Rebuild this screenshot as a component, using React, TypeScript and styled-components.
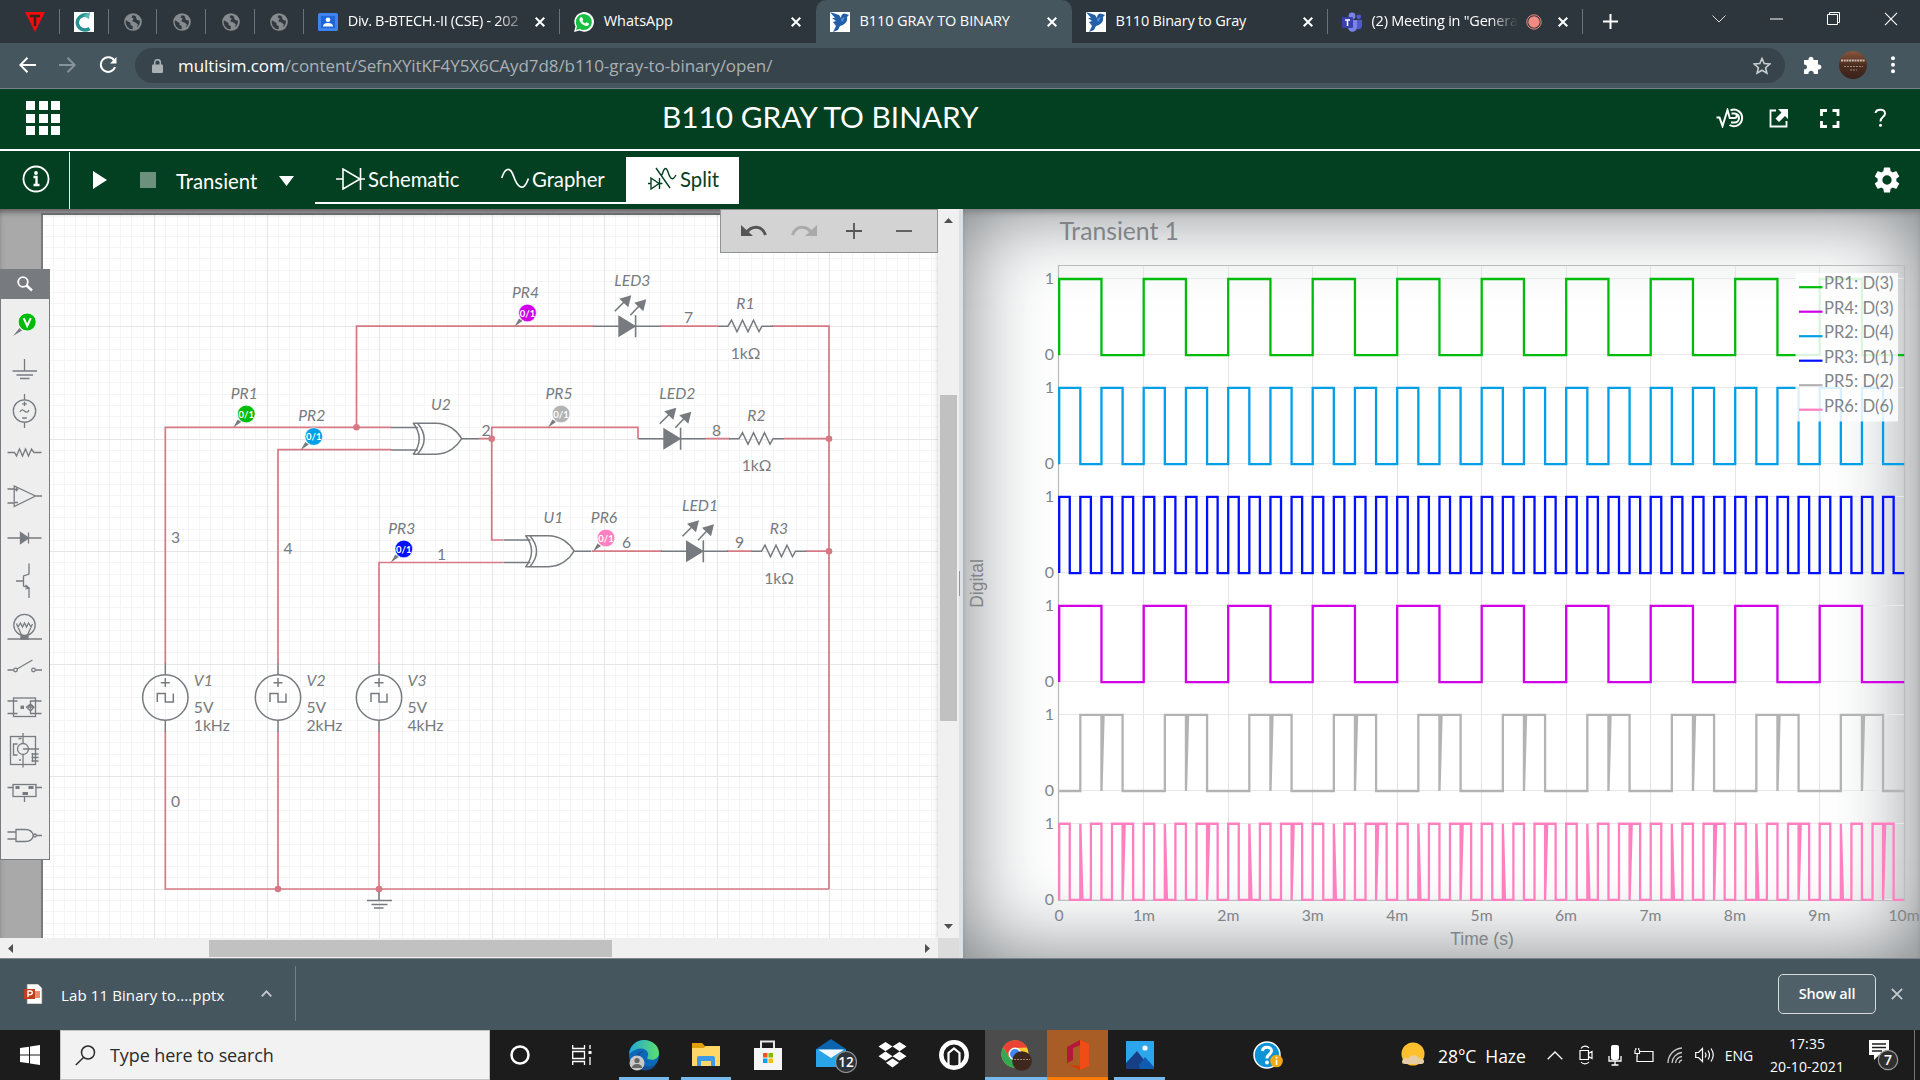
import React from "react";
import styled, { createGlobalStyle, css } from "styled-components";

const UI = `"Open Sans", "Noto Sans", sans-serif`;
const LATO = `Lato, "Open Sans", sans-serif`;

const Global = createGlobalStyle`
  html, body { margin: 0; padding: 0; }
  body { width: 1920px; height: 1080px; overflow: hidden; background: #1c1c1c; }
  * { box-sizing: border-box; }
  svg { display: block; flex: none; }
`;

const Screen = styled.div`
  width: 1920px;
  height: 1080px;
  display: flex;
  flex-direction: column;
  overflow: hidden;
  font-family: ${UI};
`;

/* ---------- browser chrome ---------- */

const TabStrip = styled.div`
  height: 43px;
  flex: none;
  display: flex;
  padding-left: 11px;
  background: #2c363c;
`;

const PinnedTab = styled.div`
  width: 48.8px;
  height: 43px;
  display: flex;
  align-items: center;
  justify-content: center;
  background: linear-gradient(#6b7379, #6b7379) right 9px / 1px 25px no-repeat;
`;

const Tab = styled.div<{ $active?: boolean; $line?: boolean }>`
  width: 256px;
  height: 43px;
  display: flex;
  align-items: center;
  padding: 0 12px 0 14px;
  color: #fff;
  ${(p) => p.$line && css`background: linear-gradient(#6b7379, #6b7379) right 9px / 1px 25px no-repeat;`}
  ${(p) => p.$active && css`background: #45565f; border-radius: 10px 10px 0 0;`}
`;

const TabTitle = styled.span<{ $fade?: boolean; $ls?: number }>`
  flex: 1;
  margin: -2px 0 0 10px;
  font-size: 14.5px;
  line-height: 20px;
  letter-spacing: ${(p) => p.$ls ?? -0.1}px;
  white-space: nowrap;
  ${(p) => p.$fade && css`mask-image: linear-gradient(90deg, #000 80%, transparent 100%);`}
`;

const TabTail = styled.div<{ $w?: number; $split?: boolean }>`
  width: ${(p) => p.$w ?? 38}px;
  display: flex;
  justify-content: ${(p) => (p.$split ? "space-between" : "flex-end")};
  align-items: center;
  padding: 0 3px 0 ${(p) => (p.$split ? 8 : 0)}px;
`;

const NewTab = styled.div`
  width: 55px;
  display: flex;
  align-items: center;
  justify-content: center;
`;

const WindowButtons = styled.div`
  margin-left: 52px;
  height: 37px;
  display: flex;
`;

const WindowButton = styled.div`
  width: 57.4px;
  display: flex;
  align-items: center;
  justify-content: center;
`;

const AddressRow = styled.div`
  height: 46px;
  flex: none;
  display: flex;
  align-items: flex-start;
  padding-top: 5px;
  background: #45565f;
  border-bottom: 1px solid #74818a;
`;

const NavButton = styled.div<{ $w: number }>`
  width: ${(p) => p.$w}px;
  height: 34px;
  display: flex;
  align-items: center;
  justify-content: center;
`;

const Omnibox = styled.div`
  width: 1650px;
  height: 35px;
  display: flex;
  align-items: center;
  padding: 0 14px 0 17px;
  border-radius: 18px;
  background: #38444b;
`;

const Url = styled.span`
  flex: 1;
  margin-left: 15px;
  font-size: 17px;
  letter-spacing: -0.07px;
  color: #a9b1b5;
  b { font-weight: 400; color: #fff; }
`;

/* ---------- application header ---------- */

const AppHeader = styled.div`
  height: 62px;
  flex: none;
  display: flex;
  align-items: center;
  padding: 0 30px 2px 26px;
  background: #034022;
  border-bottom: 2px solid #fff;
  color: #fff;
`;

const AppGrid = styled.div`
  display: grid;
  grid-template-columns: repeat(3, 9px);
  grid-auto-rows: 9px;
  gap: 3.5px;
`;

const GridDot = styled.i`
  background: #fff;
`;

const AppTitle = styled.div`
  margin: -3px 0 0 602px;
  flex: 1;
  font: 400 29.8px/36px ${LATO};
  white-space: nowrap;
`;

const HeaderIcons = styled.div`
  display: flex;
  align-items: center;
  gap: 31px;
  svg:first-child { margin-right: -8px; }
`;

const AppToolbar = styled.div`
  height: 58px;
  flex: none;
  display: flex;
  align-items: center;
  background: #034022;
  color: #fff;
  font: 400 20.3px/24px ${LATO};
`;

const InfoCell = styled.div`
  width: 70px;
  height: 57px;
  align-self: flex-end;
  display: flex;
  align-items: center;
  padding: 0 0 3px 22px;
  border-right: 1px solid #e2ebe6;
`;

const Controls = styled.div`
  width: 245px;
  display: flex;
  align-items: center;
  padding-left: 23px;
`;

const StopSquare = styled.div`
  width: 16px;
  height: 16px;
  margin: 0 20px 0 33px;
  background: #6b917c;
`;

const ModeName = styled.span`
  width: 103px;
  padding-top: 1px;
`;

const ViewTabs = styled.div`
  height: 47px;
  display: flex;
  margin-top: 1px;
`;

const ViewTab = styled.div<{ $w: number; $active?: boolean; $pad: number }>`
  width: ${(p) => p.$w}px;
  height: 47px;
  display: flex;
  align-items: center;
  gap: 3px;
  padding: 0 0 2px ${(p) => p.$pad}px;
  border-bottom: 2px solid #fff;
  background: ${(p) => (p.$active ? "#fff" : "transparent")};
  color: ${(p) => (p.$active ? "#034022" : "#fff")};
`;

const GearCell = styled.div`
  margin-left: auto;
  margin-right: 20px;
`;

/* ---------- workspace ---------- */

const Workspace = styled.div`
  height: 749px;
  flex: none;
  display: flex;
  overflow: hidden;
`;

const SchematicPane = styled.div`
  width: 959px;
  display: grid;
  grid-template-columns: 938px 21px;
  grid-template-rows: 729px 20px;
`;

const Canvas = styled.div`
  position: relative;
  overflow: hidden;
  background: #a9a9a9;
`;

const CanvasShade = styled.div`
  position: absolute;
  inset: 0;
  box-shadow: inset 0 5px 7px -3px rgba(0, 0, 0, 0.55);
  pointer-events: none;
`;

const VTrack = styled.div`
  display: flex;
  flex-direction: column;
  align-items: center;
  justify-content: space-between;
  padding: 9px 0 9px;
  background: #f0f0f0;
`;

const VThumb = styled.div`
  width: 17px;
  height: 326px;
  margin-top: -31px;
  background: #c1c1c1;
`;

const HTrack = styled.div`
  display: flex;
  align-items: center;
  padding: 0 8px;
  background: #f0f0f0;
`;

const HThumb = styled.div`
  width: 403px;
  height: 17px;
  margin: 0 auto 0 196px;
  background: #c1c1c1;
`;

const Corner = styled.div`
  background: #dcdcdc;
`;

const Splitter = styled.div`
  width: 4px;
  display: flex;
  align-items: center;
  background: #dbe1e5;
  &::before { content: ""; width: 1px; height: 25px; background: #8f979c; }
`;

const ToolPalette = styled.div`
  position: absolute;
  left: 0;
  top: 60px;
  width: 50px;
  height: 591px;
  display: flex;
  flex-direction: column;
  background: #eeeeee;
  border: 1px solid #777b80;
  border-top: 0;
`;

const PaletteSearch = styled.div`
  height: 30px;
  margin-bottom: 3px;
  display: flex;
  align-items: center;
  justify-content: center;
  background: #777b80;
`;

const PaletteItem = styled.div`
  height: 42.67px;
  display: flex;
  align-items: center;
  justify-content: center;
`;

const EditBar = styled.div`
  position: absolute;
  right: 0;
  top: 0;
  width: 218px;
  height: 44px;
  display: grid;
  grid-template-columns: repeat(4, 50px);
  place-items: center;
  padding-left: 8px;
  background: #d3d3d3;
  border: 1px solid #909396;
`;

const GrapherPane = styled.div`
  flex: 1;
  background: #fff;
  box-shadow: inset 0 0 85px #74797d, inset 0 5px 7px -3px rgba(0, 0, 0, 0.5);
`;

/* ---------- download shelf ---------- */

const Shelf = styled.div`
  height: 72px;
  flex: none;
  display: flex;
  align-items: center;
  padding: 0 17px 2px 24px;
  background: #45565f;
  border-top: 1px solid #7b868c;
`;

const ShelfItem = styled.div`
  width: 272px;
  height: 55px;
  display: flex;
  align-items: center;
  border-right: 1px solid #737f86;
  color: #fff;
  font-size: 15px;
`;

const FileName = styled.span`
  width: 163px;
  margin: 2px 37px 0 17px;
  letter-spacing: 0.12px;
  white-space: nowrap;
`;

const ShowAll = styled.div`
  width: 98px;
  height: 40px;
  margin: 0 15px 0 auto;
  display: flex;
  align-items: center;
  justify-content: center;
  border: 1px solid #d5dadc;
  border-radius: 5px;
  background: #506069;
  color: #fff;
  font-size: 14.5px;
  font-weight: 600;
  letter-spacing: -0.2px;
`;

/* ---------- taskbar ---------- */

const Taskbar = styled.div`
  height: 50px;
  flex: none;
  display: flex;
  background: #1c1c1c;
  color: #fff;
`;

const StartCell = styled.div`
  width: 60px;
  display: flex;
  align-items: center;
  justify-content: center;
`;

const SearchBox = styled.div`
  width: 430px;
  display: flex;
  align-items: center;
  gap: 14px;
  padding-left: 14px;
  background: #f2f2f2;
  border: 1px solid #c4c4c4;
  color: #2b2b2b;
  font-size: 18px;
  letter-spacing: -0.1px;
`;

const TaskCell = styled.div<{ $w?: number; $bg?: string; $bar?: string; $inset?: number; $shift?: number }>`
  position: relative;
  width: ${(p) => p.$w ?? 62}px;
  display: flex;
  align-items: center;
  justify-content: center;
  padding-left: ${(p) => p.$shift ?? 0}px;
  background: ${(p) => p.$bg ?? "transparent"};
  ${(p) =>
    p.$bar &&
    css`
      &::after {
        content: "";
        position: absolute;
        bottom: 0;
        left: ${p.$inset ?? 0}px;
        right: ${p.$inset ?? 0}px;
        height: 3px;
        background: ${p.$bar};
      }
    `}
`;

const TrayGroup = styled.div`
  margin-left: auto;
  display: flex;
  align-items: center;
`;

const TrayIcon = styled.div<{ $w: number; $right?: number }>`
  width: ${(p) => p.$w}px;
  display: flex;
  justify-content: center;
  padding-right: ${(p) => p.$right ?? 0}px;
`;

const Weather = styled.div`
  width: 112px;
  font-size: 17.5px;
  letter-spacing: -0.05px;
  white-space: pre;
  padding: 2px 0 0 10px;
`;

const Lang = styled.div`
  width: 36px;
  font-size: 14px;
  text-align: center;
`;

const Clock = styled.div`
  width: 100px;
  font-size: 14px;
  line-height: 23px;
  letter-spacing: 0.1px;
  text-align: center;
`;

const DesktopEdge = styled.div`
  width: 6px;
  height: 50px;
  border-left: 1px solid #777;
`;

/* ---------- small icons ---------- */

const CloseX = ({ size = 10, color = "#fff", w = 2 }: { size?: number; color?: string; w?: number }) => (
  <svg width={size} height={size} viewBox="0 0 10 10">
    <path d="M.7.7 9.3 9.3M9.3.7.7 9.3" stroke={color} strokeWidth={(w * 10) / size} />
  </svg>
);

const Globe = () => (
  <svg width="18" height="18" viewBox="0 0 18 18">
    <circle cx="9" cy="9" r="8.8" fill="#868b8e" />
    <path d="M2 7.2 6.5 10v2l2.2 1v3.2A7 7 0 0 1 2 7.200zM8.500 2.200 7.500 4.500 9.800 5.500 8.200 8.200 11.500 9.500 14 11.500 12.500 14.500A7 7 0 0 0 15.800 7.500L13 7 11.500 3A7 7 0 0 0 8.500 2.200z" fill="#30393f" />
  </svg>
);

const Bird = () => (
  <svg width="20" height="20" viewBox="0 0 20 20">
    <rect width="20" height="20" fill="#fff" />
    <path d="M0 0 9 3 11 6C11 2 14 .5 16 2L19 3 17 5C18 10 14 13 10 14L8 18 3 20 6 14 3 10 6 9 2 6 5 6z" fill="#2160a8" />
    <path d="M11 7 15 5 12 10z" fill="#5b9bdc" />
  </svg>
);

const ContactIcon = () => (
  <svg width="20" height="18" viewBox="0 0 20 18">
    <rect width="20" height="18" rx="1.500" fill="#3f83f0" />
    <rect x="3" y="3" width="14" height="12" fill="#1f66d6" />
    <circle cx="10" cy="6.800" r="2.300" fill="#fff" />
    <path d="M5 13.500C5 10.500 8 10 10 10s5 .5 5 3.500z" fill="#fff" />
  </svg>
);

const WhatsAppIcon = () => (
  <svg width="20" height="20" viewBox="0 0 20 20">
    <path d="M0 20 1.500 14.500A9.800 9.800 0 1 1 5.500 18.500z" fill="#fff" />
    <path d="M2 18 3 14.300A8 8 0 1 1 5.800 17z" fill="#16bf42" />
    <path d="M6.500 5.500 8 5l1.200 2.700-.9 1.200a6 6 0 0 0 3 2.700l1.200-1.300 2.500 1.200c.2 1.500-1.500 2.700-3 2.400C8.500 13.300 5.500 10 5.500 7.500c0-1 .4-1.600 1-2z" fill="#fff" />
  </svg>
);

const TeamsIcon = () => (
  <svg width="20" height="20" viewBox="0 0 20 20">
    <circle cx="10" cy="4" r="3.400" fill="#7b83eb" />
    <circle cx="16.800" cy="4.800" r="2.400" fill="#5059c9" />
    <path d="M14 8h6v6a3.500 3.500 0 0 1-5 3z" fill="#5059c9" />
    <path d="M6 8h9v7c0 6-9 6.500-9 0z" fill="#7b83eb" />
    <rect y="5" width="11" height="11" rx="1" fill="#3940ab" />
    <path d="M3 8h5M5.500 8v6" stroke="#fff" strokeWidth="1.500" />
  </svg>
);

const Arrow = ({ dir, color }: { dir: "up" | "down" | "left" | "right"; color: string }) => {
  const d = { up: "M0 5 4.500 0 9 5z", down: "M0 0 9 0 4.500 5z", left: "M5 0 0 4.500 5 9z", right: "M0 0 5 4.500 0 9z" }[dir];
  const tall = dir === "left" || dir === "right";
  return (
    <svg width={tall ? 5 : 9} height={tall ? 9 : 5}>
      <path d={d} fill={color} />
    </svg>
  );
};

/* ---------- schematic ---------- */

const WIRE = "#d67984";
const PART = "#777b80";

const SchematicSvg = styled.svg`
  position: absolute;
  left: 0;
  top: 0;
  font-family: ${LATO};
  font-size: 15.7px;
  fill: ${PART};
`;

const gridLines = () => {
  const minorX: string[] = [];
  const majorX: string[] = [];
  const minorY: string[] = [];
  const majorY: string[] = [];
  for (let i = -9; i < 70; i++) {
    const x = Math.round(154 + i * 11.255) + 0.5;
    (i % 10 === 0 ? majorX : minorX).push(`M${x} 215V938`);
  }
  for (let i = -9; i < 55; i++) {
    const y = Math.round(326 + i * 11.255) + 0.5;
    if (y > 215) (i % 10 === 0 ? majorY : minorY).push(`M43 ${y}H938`);
  }
  return { minor: [...minorX, ...minorY].join(""), major: [...majorX, ...majorY].join("") };
};

const Source = ({ x, name, freq }: { x: number; name: string; freq: string }) => (
  <g>
    <path d={`M${x} 663.500V675M${x} 720V731.500M${x - 4.500} 682.700h9M${x} 678v9M${x - 8} 702v-8.500h8v8.500h8v-8.500`} stroke={PART} strokeWidth="1.500" fill="none" />
    <circle cx={x} cy="697.500" r="22.700" stroke={PART} strokeWidth="1.500" fill="none" />
    <text x={x + 28.500} y="686" fontStyle="italic">{name}</text>
    <text x={x + 28.500} y="713">5V</text>
    <text x={x + 28.500} y="731">{freq}</text>
  </g>
);

const XorGate = ({ x, y }: { x: number; y: number }) => (
  <g transform={`translate(${x} ${y})`} stroke={PART} strokeWidth="1.500" fill="none">
    <path d="M0-11.300H27M0 11.200H27M70.700 0H88" />
    <path d="M22-16C30.500-5 30.500 5 22 16M26.500-15.500C35.500-5 35.500 5 26.500 15.500M23-15.500H45C57-15.500 66-8 70.700 0 66 8 57 15.500 45 15.500H23" />
  </g>
);

const Led = ({ x, y, name }: { x: number; y: number; name: string }) => (
  <g transform={`translate(${x} ${y})`}>
    <path d="M0 0H67M42.300-11V11M21.500-15 31-24.500M37-11 46-20.500" stroke={PART} strokeWidth="1.600" fill="none" />
    <path d="M25-11 43 0 25 11zM38-31 35 -19 26-27.500zM53-27 50-15 41-23.500z" fill={PART} />
    <text x="39" y="-40" textAnchor="middle" fontStyle="italic">{name}</text>
  </g>
);

const Resistor = ({ x, y, name }: { x: number; y: number; name: string }) => (
  <g transform={`translate(${x} ${y})`}>
    <path d="M0 0H10L13.500-6 19 5.500 24.500-6 30 5.500 35.500-6 41 5.500 44 0H55" stroke={PART} strokeWidth="1.500" fill="none" />
    <text x="27.500" y="-17.500" textAnchor="middle" fontStyle="italic">{name}</text>
    <text x="27.500" y="32.500" textAnchor="middle">1kΩ</text>
  </g>
);

const Probe = ({ x, y, name, color }: { x: number; y: number; name: string; color: string }) => (
  <g transform={`translate(${x} ${y})`}>
    <path d="M-13 13.500-8.500 5.500-5 8z" fill={PART} />
    <circle r="8.800" fill={color} stroke="#fff" strokeWidth="0.600" />
    <text y="3.500" textAnchor="middle" fontSize="10.300" fontWeight="700" fill="#fff" textLength="15.500" lengthAdjust="spacingAndGlyphs">0/1</text>
    <text x="-2" y="-15.300" textAnchor="middle" fontStyle="italic">{name}</text>
  </g>
);

const Dot = ({ x, y }: { x: number; y: number }) => <circle cx={x} cy={y} r="3.300" fill={WIRE} />;

const Schematic = () => {
  const g = gridLines();
  return (
    <SchematicSvg width="938" height="729" viewBox="0 209 938 729">
      <rect x="42" y="214" width="910" height="740" fill="#fff" stroke="#777b80" strokeWidth="2" />
      <path d={g.minor} stroke="#f5f5f5" />
      <path d={g.major} stroke="#e6e6e6" />
      <path
        d="M165.300 664V427.300H391M165.300 731V889H829M278 664V449.700H391M278 731V889M356.500 427.300V326.200H594M660 326.200H718M772 326.200H829V889M479 438.700H491.700V427.300H638V438.700M491.700 438.700V540H503M705 438.700H730M784 438.700H829M592 551.200H662M727 551.200H752M806 551.200H829M379 664V562.500H503M379 731V889"
        stroke={WIRE}
        strokeWidth="1.700"
        fill="none"
      />
      <XorGate x={391} y={438.7} />
      <XorGate x={503.4} y={551.2} />
      <Led x={593.3} y={326.2} name="LED3" />
      <Led x={638.3} y={438.7} name="LED2" />
      <Led x={661} y={551.2} name="LED1" />
      <Resistor x={718} y={326.2} name="R1" />
      <Resistor x={729} y={438.7} name="R2" />
      <Resistor x={751.5} y={551.2} name="R3" />
      <Source x={165.3} name="V1" freq="1kHz" />
      <Source x={278} name="V2" freq="2kHz" />
      <Source x={379} name="V3" freq="4kHz" />
      <path d="M379 889V900M367 900.500H392M371.500 904.500H387.500M374 908H383.500" stroke={PART} strokeWidth="1.600" />
      <Dot x={356.5} y={427.3} />
      <Dot x={491.7} y={438.7} />
      <Dot x={829} y={438.7} />
      <Dot x={829} y={551.2} />
      <Dot x={278} y={889} />
      <Dot x={379} y={889} />
      <Probe x={246.3} y={414} name="PR1" color="#00bc0a" />
      <Probe x={313.8} y={436.5} name="PR2" color="#009fe8" />
      <Probe x={403.8} y={549} name="PR3" color="#0010ff" />
      <Probe x={527.5} y={313} name="PR4" color="#d000e8" />
      <Probe x={561} y={414} name="PR5" color="#b3b3b3" />
      <Probe x={606} y={538} name="PR6" color="#ff80c0" />
      <text x="441" y="410" textAnchor="middle" fontStyle="italic">U2</text>
      <text x="553.500" y="523" textAnchor="middle" fontStyle="italic">U1</text>
      <text x="171" y="543">3</text>
      <text x="283.500" y="554">4</text>
      <text x="171" y="807">0</text>
      <text x="437" y="560">1</text>
      <text x="481.500" y="436">2</text>
      <text x="684" y="322.500">7</text>
      <text x="712" y="436">8</text>
      <text x="622" y="548">6</text>
      <text x="735" y="548">9</text>
    </SchematicSvg>
  );
};

const paletteDrawings: React.ReactNode[] = [
  <g transform="translate(0 -1)"><path d="M-11.500 14-5 6-2.500 8.500z" fill={PART} stroke="none" /><circle cx="2.700" r="9" fill="#00bc0a" stroke="#fff" strokeWidth=".8" /><path d="M-.8-3.800 2.700 4 6.200-3.800" stroke="#fff" strokeWidth="2" fill="none" /></g>,
  <path d="M0-7V5M-12 5H12.500M-8 9H8.500M-4.500 12.500H5" />,
  <g transform="translate(0 2)"><circle r="11.200" /><path d="M0-17V-11M0 11V17M0-9.500V-5M-2.300-7.200H2.300M-2.300 7H2.300M-4.500 1C-3-2.500-1-1 0 0S3 2.500 4.500-1" /></g>,
  <path d="M-17 1.500H-10L-8 5-5-2-2 5 1-2 4 5 7-2 9.500 1.500H17" />,
  <path d="M-10.300-8V12.500L11 2zM-17-5H-10M-17 9H-10M11 2H17.500M-8-6.500V-2.500M-10-4.500H-6.200M-9.500 8.500H-6.500" />,
  <g><path d="M-17 1H17M4-4.500V6.500" /><path d="M-4-4.500 4 1-4 6.500z" fill={PART} /></g>,
  <path d="M4.500-15.500V-5L-1-3V7L4.500 9V19M-8.500 2H-1M1 6 4.500 9 1 10" />,
  <g transform="translate(0 1)"><circle cy="2" r="10.700" /><path d="M-17 16H17.500M-8 1-6.500 4-4 0-2 4 0 0 2 4 4 0 6.500 4 8 1M-7 3-3 12M7 3 3 12M-8 1H-7" /><path d="M-3.500 12.500H3.500V16H-3.500z" fill={PART} /></g>,
  <g transform="translate(0 1)"><circle cx="-9" cy="4" r="1.800" /><circle cx="9" cy="4" r="1.800" /><path d="M-17 4H-11M11 4H17.500M-7.500 3 8-6" /></g>,
  <g><rect x="-11" y="-9" width="22" height="18.500" /><path d="M-17-6H-7M-17 6.500H-7M17-6H6V-3L9.500 0 6 4 2 0 6-3M6 4V6.500H17M6-2.500V2.500M3.500 0H8.500" /><path d="M-4 .3H-.5" strokeWidth="3.500" /></g>,
  <g><rect x="-14" y="-13.500" width="25" height="28" /><circle cx="-1.500" cy="-1" r="5.500" /><path d="M-1.500-17V-6M-1.500 5V17.500M-1.500-1H14.500M-7-6H-11V5H-7M7 4H14M7 7.500H14M7 11H14M8 3V12M-5.500 10H-3.500M-6-11.500H-3" /></g>,
  <g transform="translate(0 -1.500)"><rect x="-11.500" y="-7" width="23" height="12" /><path d="M-17-4H-11M11-4H17.500M0 5V10.500" /><path d="M-9-4H-5M4-4H9M-2 2H3.500" strokeWidth="3" /></g>,
  <g><path d="M-8.500-5.500H1C5-5.500 8-3 9 .5 8 4 5 6.500 1 6.500H-8.500zM-17-3H-8.500M-17 4H-8.500M12 .5H17.500" /><circle cx="10.300" cy=".5" r="1.500" /></g>,
];

/* ---------- grapher ---------- */

const X0 = 1059.2;
const MS = 84.5;

type Point = [number, number];

const square = (period: number): Point[] => {
  const pts: Point[] = [[0, 0]];
  for (let t = 0; t < 10 - 1e-6; t += period) {
    pts.push([t, 0], [t, 1], [t + period / 2, 1], [t + period / 2, 0]);
  }
  pts.push([10, 0]);
  return pts;
};

const repeatMs = (shape: Point[]): Point[] => {
  const pts: Point[] = [];
  for (let n = 0; n < 10; n++) shape.forEach(([t, v]) => pts.push([n + t, v]));
  return pts;
};

const toPath = (pts: Point[], top: number) =>
  pts.map(([t, v], i) => `${i ? "L" : "M"}${(X0 + t * MS).toFixed(2)} ${(top + (1 - v) * 76.2).toFixed(2)}`).join("");

const xorA: Point[] = [[0, 0], [0.25, 0], [0.25, 1], [0.5, 1], [0.5, 0], [0.525, 1], [0.75, 1], [0.75, 0], [1, 0]];
const xorB: Point[] = [
  [0, 0], [0, 1], [0.125, 1], [0.125, 0], [0.25, 0], [0.25, 1], [0.275, 0], [0.375, 0], [0.375, 1], [0.5, 1], [0.5, 0],
  [0.625, 0], [0.625, 1], [0.75, 1], [0.75, 0], [0.775, 1], [0.875, 1], [0.875, 0], [1, 0],
];

const traces = [
  { color: "#00bc0a", pts: square(1) },
  { color: "#009fe8", pts: square(0.5) },
  { color: "#0010ff", pts: square(0.25) },
  { color: "#d000e8", pts: square(1) },
  { color: "#b3b3b3", pts: repeatMs(xorA) },
  { color: "#ff80c0", pts: repeatMs(xorB) },
];

const legend = [
  ["PR1: D(3)", "#00bc0a"],
  ["PR4: D(3)", "#d000e8"],
  ["PR2: D(4)", "#009fe8"],
  ["PR3: D(1)", "#0010ff"],
  ["PR5: D(2)", "#b3b3b3"],
  ["PR6: D(6)", "#ff80c0"],
];

const PlotSvg = styled.svg`
  font-family: ${LATO};
  font-size: 16px;
  fill: #808488;
`;

const Plot = () => (
  <PlotSvg width="957" height="749" viewBox="963 209 957 749">
    <text x="1059.500" y="240" fontSize="24.700">Transient 1</text>
    {Array.from({ length: 9 }, (_, i) => (
      <path key={i} d={`M${Math.round(1058.5 + (i + 1) * 84.55)}.500 266V900`} stroke="#e4e4e4" />
    ))}
    {traces.map((_, i) => (
      <path key={i} d={`M1059 ${278.500 + Math.round(i * 109)}H1904M1059 ${354.500 + Math.round(i * 109)}H1904`} stroke="#e8e8e8" />
    ))}
    <path d="M1058.500 901V265.500H1904.500V901" stroke="#b9bbbd" strokeWidth="1.200" fill="none" />
    <path d="M1058 900.500H1905" stroke="#b9bbbd" />
    {traces.map((t, i) => (
      <path key={i} d={toPath(t.pts, 279 + i * 108.95)} stroke={t.color} strokeWidth="2.300" fill="none" />
    ))}
    {traces.map((_, i) => (
      <g key={i} textAnchor="end">
        <text x="1054" y={284 + i * 109}>1</text>
        <text x="1054" y={360 + i * 109}>0</text>
      </g>
    ))}
    <rect x="1795.500" y="273" width="102.500" height="148.500" fill="#fff" fillOpacity=".85" />
    {legend.map(([name, color], i) => (
      <g key={name}>
        <path d={`M1799 ${287.200 + i * 24.500}h23.500`} stroke={color} strokeWidth="2.200" />
        <text x="1824" y={289 + i * 24.500} fontSize="18" textLength="69.500" lengthAdjust="spacingAndGlyphs">{name}</text>
      </g>
    ))}
    <g fontSize="15.700" textAnchor="middle">
      <text x="1059" y="921">0</text>
      {Array.from({ length: 9 }, (_, i) => (
        <text key={i} x={1059.500 + (i + 1) * 84.42} y="921">{i + 1}m</text>
      ))}
      <text x="1904" y="921">10m</text>
    </g>
    <g fontFamily='"Liberation Sans", Arial, sans-serif' textAnchor="middle">
      <text x="1482" y="945" fontSize="17.500">Time (s)</text>
      <text transform="translate(983 583.500) rotate(-90)" fontSize="17.500">Digital</text>
    </g>
  </PlotSvg>
);

/* ---------- page ---------- */

export default function App() {
  return (
    <Screen>
      <Global />
      <TabStrip>
        <PinnedTab>
          <svg width="20" height="20"><path d="M0 0H20L10 20z" fill="#f20d0d" /><path d="M5 4H15M10 4V14" stroke="#35231f" strokeWidth="2.500" /></svg>
        </PinnedTab>
        <PinnedTab>
          <svg width="20" height="20"><rect width="20" height="20" fill="#fff" /><path d="M15 3.500C7 1 2.500 7 3.500 12s7 8 12 4.500" fill="none" stroke="#27908f" strokeWidth="3.500" /><path d="M9 4 16 0 15 7z" fill="#5fb6b4" /></svg>
        </PinnedTab>
        {[0, 1, 2, 3].map((i) => (
          <PinnedTab key={i}><Globe /></PinnedTab>
        ))}
        <Tab $line>
          <ContactIcon />
          <TabTitle $fade $ls={-0.32}>Div. B-BTECH.-II (CSE) - 202</TabTitle>
          <TabTail $w={16}><CloseX /></TabTail>
        </Tab>
        <Tab>
          <WhatsAppIcon />
          <TabTitle $ls={0}>WhatsApp</TabTitle>
          <TabTail><CloseX /></TabTail>
        </Tab>
        <Tab $active>
          <Bird />
          <TabTitle>B110 GRAY TO BINARY</TabTitle>
          <TabTail><CloseX /></TabTail>
        </Tab>
        <Tab $line>
          <Bird />
          <TabTitle $ls={-0.2}>B110 Binary to Gray</TabTitle>
          <TabTail><CloseX /></TabTail>
        </Tab>
        <Tab $line>
          <TeamsIcon />
          <TabTitle $fade $ls={-0.22}>(2) Meeting in "Genera</TabTitle>
          <TabTail $w={53} $split>
            <svg width="16" height="16"><circle cx="8" cy="8" r="5.700" fill="#f28b82" /><circle cx="8" cy="8" r="7.200" fill="none" stroke="#f28b82" /></svg>
            <CloseX />
          </TabTail>
        </Tab>
        <NewTab><svg width="15" height="15"><path d="M7.500 0V15M0 7.500H15" stroke="#fff" strokeWidth="2" /></svg></NewTab>
        <WindowButtons>
          <WindowButton><svg width="14" height="8"><path d="M.5.500 7 7 13.500.500" stroke="#ddd" fill="none" /></svg></WindowButton>
          <WindowButton><svg width="13" height="2"><path d="M0 1H13" stroke="#fff" /></svg></WindowButton>
          <WindowButton><svg width="14" height="14"><path d="M.5 2.500H10.500V12.500H.5zM2.500 2.500V.5H12.500V10.500H10.500" stroke="#fff" fill="none" /></svg></WindowButton>
          <WindowButton><CloseX size={14} w={1.1} /></WindowButton>
        </WindowButtons>
      </TabStrip>

      <AddressRow>
        <NavButton $w={55}><svg width="17" height="16"><path d="M17 8H2M8.500.8 1.300 8l7.200 7.200" stroke="#fff" strokeWidth="2" fill="none" /></svg></NavButton>
        <NavButton $w={25}><svg width="17" height="16"><path d="M0 8H15M8.500.8 15.700 8l-7.200 7.200" stroke="#87939a" strokeWidth="2" fill="none" /></svg></NavButton>
        <NavButton $w={55}><svg width="18" height="18"><path d="M15.500 5A7.300 7.300 0 1 0 16 11" stroke="#fff" strokeWidth="2" fill="none" /><path d="M17.500 1V7.500H11z" fill="#fff" /></svg></NavButton>
        <Omnibox>
          <svg width="11" height="14"><path d="M2.700 6V3.500a2.800 2.800 0 0 1 5.600 0V6" stroke="#a9b1b5" strokeWidth="1.500" fill="none" /><rect y="5.500" width="11" height="8.500" rx="1" fill="#a9b1b5" /></svg>
          <Url><b>multisim.com</b>/content/SefnXYitKF4Y5X6CAyd7d8/b110-gray-to-binary/open/</Url>
          <svg width="18" height="18" viewBox="0 0 18 18"><path d="M9 1.500 11.200 6.500 16.800 7 12.600 10.700 13.900 16.200 9 13.300 4.100 16.200 5.400 10.700 1.200 7 6.800 6.500z" fill="none" stroke="#c9ced1" strokeWidth="1.600" /></svg>
        </Omnibox>
        <NavButton $w={55}><svg width="20" height="19" viewBox="0 0 20 19"><path d="M1 4H5.500C5 0 10.500-.5 10.500 3.500V4H15V8.500C19.500 8 19.500 14 15 13.500V18H10.800C11 13.500 5 13.500 5.500 18H1V13.500C5 13.500 5 8.500 1 8.500z" fill="#fff" /></svg></NavButton>
        <NavButton $w={26}>
          <svg width="28" height="28"><defs><linearGradient id="av" x2="0" y2="1"><stop stopColor="#8a563e" /><stop offset=".5" stopColor="#4c2e20" /><stop offset="1" stopColor="#3a2118" /></linearGradient></defs><circle cx="14" cy="14" r="14" fill="url(#av)" /><path d="M2 9.500H26" stroke="#c9b9b0" strokeWidth="2" strokeDasharray="2 .7" /><path d="M5 15.500H24M11 19H18" stroke="#a08a7e" strokeDasharray="2 1" /></svg>
        </NavButton>
        <NavButton $w={53}><svg width="4" height="18"><circle cx="2" cy="2.300" r="2" fill="#fff" /><circle cx="2" cy="8.800" r="2" fill="#fff" /><circle cx="2" cy="15.300" r="2" fill="#fff" /></svg></NavButton>
      </AddressRow>

      <AppHeader>
        <AppGrid>{Array.from({ length: 9 }, (_, i) => <GridDot key={i} />)}</AppGrid>
        <AppTitle>B110 GRAY TO BINARY</AppTitle>
        <HeaderIcons>
          <svg width="30" height="20" viewBox="0 0 30 20"><path d="M.5 9.500H3.500L6.500 18 11.500 2 13.800 10H18.500a2.200 2.200 0 0 0 0-4.500H15.500M15 14.500H18.500a4.500 4.500 0 0 0 0-9M14.500 2.300A8.300 8.300 0 1 1 13.500 17" stroke="#fff" strokeWidth="2" fill="none" /></svg>
          <svg width="20" height="20"><path d="M7 2.500H1.500V18.500H17.500V13" stroke="#fff" strokeWidth="1.800" fill="none" /><path d="M9 1H19V11L16 8 10 14 6.500 10.500 12.500 4.500z" fill="#fff" /></svg>
          <svg width="20" height="19"><path d="M1.500 7V1.500H7M12.500 1.500H18V7M18 12V17.500H12.500M7 17.500H1.500V12" stroke="#fff" strokeWidth="2.800" fill="none" /></svg>
          <svg width="19" height="20"><path d="M4.500 5C5 1 14 0 14 5.500 14 9 9.500 8.500 9.500 13.500" stroke="#fff" strokeWidth="2" fill="none" /><circle cx="9.500" cy="17.200" r="1.500" fill="#fff" /></svg>
        </HeaderIcons>
      </AppHeader>

      <AppToolbar>
        <InfoCell>
          <svg width="28" height="28"><circle cx="14" cy="14" r="12.500" stroke="#fff" strokeWidth="1.800" fill="none" /><path d="M11.500 12H14.500V20M11.500 20H17.500" stroke="#fff" strokeWidth="2.400" fill="none" /><circle cx="14" cy="8" r="1.900" fill="#fff" /></svg>
        </InfoCell>
        <Controls>
          <svg width="14" height="18"><path d="M0 0 14 9 0 18z" fill="#fff" /></svg>
          <StopSquare />
          <ModeName>Transient</ModeName>
          <svg width="15" height="12"><path d="M0 2H15L7.500 12z" fill="#fff" /></svg>
        </Controls>
        <ViewTabs>
          <ViewTab $w={164} $pad={21}>
            <svg width="29" height="22"><path d="M0 11H7M7 1V21L24 11zM24.500 0V22M24 11H29" stroke="#fff" strokeWidth="1.600" fill="none" /></svg>
            Schematic
          </ViewTab>
          <ViewTab $w={147} $pad={22}>
            <svg width="28" height="22"><path d="M.7 10C4 0 9-2 12.500 8S22 26 27.500 10.500" stroke="#fff" strokeWidth="1.700" fill="none" /></svg>
            Grapher
          </ViewTab>
          <ViewTab $w={113} $pad={22} $active>
            <svg width="29" height="23"><path d="M0 16.500H3M3 11V22L11 16.500zM11.500 11V22M11 16.500H14.500M8 1 22 21M14 8C16 1 18-1 20 5S24 15 28 8" stroke="#034022" strokeWidth="1.400" fill="none" /></svg>
            Split
          </ViewTab>
        </ViewTabs>
        <GearCell>
          <svg width="26" height="26" viewBox="2.300 2 19.400 20"><path fill="#fff" d="M19.140 12.940c.04-.3.06-.61.06-.94 0-.32-.02-.64-.07-.94l2.030-1.580a.49.49 0 0 0 .12-.61l-1.920-3.320a.488.488 0 0 0-.59-.22l-2.390.96c-.5-.38-1.030-.7-1.620-.94l-.36-2.540a.484.484 0 0 0-.48-.41h-3.840c-.24 0-.43.17-.47.410l-.36 2.540c-.59.240-1.130.570-1.620.940l-2.390-.96c-.22-.08-.47 0-.59.220L2.740 8.870c-.12.210-.08.470.120.610l2.030 1.580c-.05.300-.09.630-.09.940s.02.640.070.940l-2.030 1.580a.49.49 0 0 0-.12.610l1.920 3.320c.12.220.370.290.590.220l2.390-.96c.5.380 1.030.700 1.620.940l.36 2.540c.05.240.240.410.480.410h3.840c.24 0 .44-.17.470-.41l.36-2.540c.59-.24 1.130-.56 1.620-.94l2.390.96c.22.080.470 0 .590-.22l1.920-3.320c.12-.22.070-.47-.12-.61zM12 15.600A3.600 3.600 0 1 1 12 8.400a3.600 3.600 0 0 1 0 7.200z" /></svg>
        </GearCell>
      </AppToolbar>

      <Workspace>
        <SchematicPane>
          <Canvas>
            <Schematic />
            <CanvasShade />
            <EditBar>
              <svg width="26" height="12"><path d="M5 8C11 0 21 0 24.500 10" stroke="#555" strokeWidth="3" fill="none" /><path d="M0 0V11H12z" fill="#555" /></svg>
              <svg width="26" height="12"><path d="M21 8C15 0 5 0 1.500 10" stroke="#aaa" strokeWidth="3" fill="none" /><path d="M26 0V11H14z" fill="#aaa" /></svg>
              <svg width="16" height="16"><path d="M8 0V16M0 8H16" stroke="#555" strokeWidth="1.800" /></svg>
              <svg width="16" height="16"><path d="M0 8H16" stroke="#555" strokeWidth="1.800" /></svg>
            </EditBar>
            <ToolPalette>
              <PaletteSearch>
                <svg width="16" height="16"><circle cx="6" cy="6" r="4.800" stroke="#fff" strokeWidth="1.800" fill="none" /><path d="M9.500 9.500 15 14.500" stroke="#fff" strokeWidth="2.500" /></svg>
              </PaletteSearch>
              {paletteDrawings.map((d, i) => (
                <PaletteItem key={i}>
                  <svg width="46" height="42" viewBox="-22.500 -21 46 42" overflow="visible" fill="none" stroke={PART} strokeWidth="1.300">{d}</svg>
                </PaletteItem>
              ))}
            </ToolPalette>
          </Canvas>
          <VTrack>
            <Arrow dir="up" color="#505050" />
            <VThumb />
            <Arrow dir="down" color="#505050" />
          </VTrack>
          <HTrack>
            <Arrow dir="left" color="#505050" />
            <HThumb />
            <Arrow dir="right" color="#505050" />
          </HTrack>
          <Corner />
        </SchematicPane>
        <Splitter />
        <GrapherPane><Plot /></GrapherPane>
      </Workspace>

      <Shelf>
        <ShelfItem>
          <svg width="20" height="20"><path d="M3 0H14L18 4V20H3z" fill="#fff" stroke="#8a7a74" strokeWidth=".7" /><path d="M11 7H16V14H11z" fill="#ed8b6e" /><rect y="5" width="11" height="10" fill="#c43e1c" /><path d="M4 13V7H6.500a1.700 1.700 0 0 1 0 3.600H4" stroke="#fff" strokeWidth="1.400" fill="none" /></svg>
          <FileName>Lab 11 Binary to....pptx</FileName>
          <svg width="11" height="7"><path d="M.7 6.300 5.500 1.300 10.300 6.300" stroke="#c6cccf" strokeWidth="1.700" fill="none" /></svg>
        </ShelfItem>
        <ShowAll>Show all</ShowAll>
        <CloseX size={12} color="#c6cccf" w={1.7} />
      </Shelf>

      <Taskbar>
        <StartCell>
          <svg width="20" height="20"><path d="M0 3 9 1.700V9.500H0zM10 1.500 20 0V9.500H10zM0 10.500H9V18.300L0 17zM10 10.500H20V20L10 18.500z" fill="#fff" /></svg>
        </StartCell>
        <SearchBox>
          <svg width="21" height="21"><circle cx="13" cy="7.500" r="6.500" stroke="#2b2b2b" strokeWidth="1.500" fill="none" /><path d="M8.500 12.500 .8 20" stroke="#2b2b2b" strokeWidth="1.500" /></svg>
          Type here to search
        </SearchBox>
        <TaskCell $w={60}><svg width="20" height="20"><circle cx="10" cy="10" r="8.500" stroke="#fff" strokeWidth="2.500" fill="none" /></svg></TaskCell>
        <TaskCell $w={63}><svg width="20" height="20"><path d="M.7 0V3.500H12.500V0M.7 6.500H12.500V13.500H.7zM.7 20V16.500H12.500V20M18 0V4M18 12V20" stroke="#fff" strokeWidth="1.300" fill="none" /><rect x="16.500" y="6" width="3" height="3" fill="#fff" /></svg></TaskCell>
        <TaskCell $bar="#76b9ed" $inset={6}>
          <svg width="32" height="32" viewBox="0 0 32 32"><defs><linearGradient id="eg"><stop stopColor="#25a5d8" /><stop offset="1" stopColor="#5be06c" /></linearGradient></defs><circle cx="16" cy="16" r="15" fill="#0c68b8" /><path d="M1 15C2 6 9 1 16 1S31 6 31 14C31 20 25 22 20 20 18 19 21 17 20 14 18 9 10 7 1 15z" fill="url(#eg)" /><path d="M11 17C8 26 18 31 28 25 24 34 10 33 6 25 4 21 7 15 14 12 19 10 11 15 11 17z" fill="#164e91" /><circle cx="9" cy="24" r="7.500" fill="#c8c8c8" /><circle cx="9" cy="21.500" r="2.600" fill="#666" /><path d="M4 29C4 23.500 14 23.500 14 29z" fill="#666" /></svg>
        </TaskCell>
        <TaskCell $bar="#76b9ed" $inset={6}>
          <svg width="28" height="24"><path d="M0 0H10L13 3H28V23H0z" fill="#e3a008" /><path d="M0 5H12L14 3H28V23H0z" fill="#ffd766" /><path d="M5 23V15Q5 13 7 13H21Q23 13 23 15V23H19V18H9V23z" fill="#3f9ae5" /></svg>
        </TaskCell>
        <TaskCell>
          <svg width="30" height="32"><path d="M8 9V2.500H21V9" stroke="#e5e5e5" strokeWidth="2" fill="none" /><path d="M1 9H29V31H1z" fill="#f5f5f5" /><path d="M10 14H14.500V18.500H10z" fill="#f25022" /><path d="M15.500 14H20V18.500H15.500z" fill="#7fba00" /><path d="M10 19.500H14.500V24H10z" fill="#00a4ef" /><path d="M15.500 19.500H20V24H15.500z" fill="#ffb900" /></svg>
        </TaskCell>
        <TaskCell $shift={11}>
          <svg width="44" height="36" viewBox="-1 0 44 36"><path d="M1 12 16 2 31 12V30H1z" fill="#0b64ad" /><path d="M1 12.500H31V30H1z" fill="#29a4e8" /><path d="M3 12.500H29L16 21z" fill="#f4f9fd" /><circle cx="31" cy="25" r="10.500" fill="#2d3338" stroke="#8e9296" strokeWidth="1.200" /><text x="31" y="30" textAnchor="middle" fontFamily="Open Sans" fontSize="13.500" fontWeight="600" fill="#fff">12</text></svg>
        </TaskCell>
        <TaskCell>
          <svg width="29" height="26"><path d="M7.500 0 14.500 4.600 7.500 9.200.500 4.600zM21.500 0 28.500 4.600 21.500 9.200 14.500 4.600zM7.500 9.600 14.500 14.200 7.500 18.800.500 14.200zM21.500 9.600 28.500 14.200 21.500 18.800 14.500 14.200zM14.500 16.500 21 20.800 14.500 25.500 8 20.800z" fill="#fff" /></svg>
        </TaskCell>
        <TaskCell>
          <svg width="30" height="30"><circle cx="15" cy="15" r="12.700" fill="none" stroke="#fff" strokeWidth="4.500" /><path d="M9.500 25V13L15 8.500 20.500 13V25" fill="none" stroke="#fff" strokeWidth="2.200" /></svg>
        </TaskCell>
        <TaskCell $w={62} $bg="#4c4c4c" $bar="#76b9ed">
          <svg width="32" height="32" viewBox="0 0 32 32"><circle cx="15" cy="15" r="13.500" fill="#fcc934" /><path d="M3 8.500A13.500 13.500 0 0 1 27 8.500L15 9 9 18z" fill="#ea4335" /><path d="M3 8.500A13.500 13.500 0 0 0 14 28.500L19 19 9 18z" fill="#34a853" /><circle cx="15" cy="15" r="6.500" fill="#fff" /><circle cx="15" cy="15" r="5" fill="#4285f4" /><circle cx="22" cy="22" r="9.800" fill="#3e271d" /><path d="M14 20.500H30" stroke="#9c887b" strokeDasharray="2 1" /></svg>
        </TaskCell>
        <TaskCell $w={61} $bg="#a85d26" $bar="#ff7a00">
          <svg width="24" height="30"><path d="M14 0 23 4V26L14 30 3 25 14 26V5L7 8V20L1 23V8z" fill="#d83b01" /><path d="M14 0 1 7V23L7 20V8L14 5z" fill="#b3173b" /><path d="M14 0 23 4V26L14 30z" fill="#f04d16" /></svg>
        </TaskCell>
        <TaskCell $w={63} $bar="#76b9ed" $inset={6}>
          <svg width="28" height="28"><rect width="28" height="28" fill="#2ba5ec" /><path d="M0 22 11 10 25 28H0z" fill="#173f85" /><path d="M13 24 19 16 28 26V28H14z" fill="#0f5cb0" /><circle cx="19" cy="7" r="2.600" fill="#fff" /></svg>
        </TaskCell>
        <TaskCell $w={194}>
          <svg width="30" height="28" viewBox="0 0 30 28"><circle cx="14" cy="14" r="13" fill="#0d93d6" stroke="#fff" strokeWidth="1.500" /><path d="M9.500 10C10 5 18.500 5 18.500 10 18.500 13.500 14 13 14 17.500" stroke="#fff" strokeWidth="3" fill="none" /><circle cx="14" cy="21.500" r="1.900" fill="#fff" /><circle cx="23.500" cy="20" r="6.300" fill="#f2a814" /><path d="M23.500 19V24M23.500 15.800V17.500" stroke="#fff" strokeWidth="1.600" /></svg>
        </TaskCell>
        <TrayGroup>
          <TrayIcon $w={28}><svg width="28" height="26"><circle cx="13" cy="12" r="11.500" fill="#ffc02e" /><path d="M2 20C2 16 6 15 8 17 10 12 18 12 19 17 24 15 26 21 22 22H5C3 22 2 21 2 20z" fill="#e7cda6" /></svg></TrayIcon>
          <Weather>28°C  Haze</Weather>
          <TrayIcon $w={30}><svg width="16" height="9"><path d="M.7 8.300 8 1 15.300 8.300" stroke="#fff" strokeWidth="1.300" fill="none" /></svg></TrayIcon>
          <TrayIcon $w={32}><svg width="15" height="20"><path d="M1 5.500H9.500V14.500H1zM9.500 8.500 13 6.500V13.500L9.500 11.500M2 3.500C4 .5 8 .5 10 3M2 17C4 19.500 8 19.500 10 17" stroke="#fff" strokeWidth="1.200" fill="none" /></svg></TrayIcon>
          <TrayIcon $w={25}><svg width="14" height="21"><rect x="3" width="8" height="15" rx="2" fill="#fff" /><path d="M1 11V16H13V11M7 16V20M3.500 20H10.500" stroke="#fff" strokeWidth="1.300" fill="none" /></svg></TrayIcon>
          <TrayIcon $w={33}><svg width="20" height="15"><path d="M6 3.500H19V13.500H3V8M1 2V5.500H5.500V2M3.200 5.500V9M1.800 0V2M4.700 0V2" stroke="#fff" strokeWidth="1.200" fill="none" /></svg></TrayIcon>
          <TrayIcon $w={30}><svg width="17" height="17"><path d="M1 16A15 15 0 0 1 15 1M5 16A11 11 0 0 1 15 5.500M8.500 16A7 7 0 0 1 15 9.500M12 16A4 4 0 0 1 15 13" stroke="#ccc" strokeWidth="1.300" fill="none" /></svg></TrayIcon>
          <TrayIcon $w={31} $right={2}><svg width="20" height="16"><path d="M.7 5.500H3.500L7.500 1.500V14.500L3.500 10.500H.7zM10 5.500Q12 8 10 10.500M13 3.500Q16 8 13 12.500M16 1.500Q20.500 8 16 14.500" stroke="#fff" strokeWidth="1.200" fill="none" /></svg></TrayIcon>
          <Lang>ENG</Lang>
          <Clock>17:35<br />20-10-2021</Clock>
          <TrayIcon $w={57} $right={6}>
            <svg width="32" height="32"><path d="M2 1H22V16H12L7 21V16H2z" fill="#fff" /><path d="M5 5H19M5 8.500H19M5 12H15" stroke="#1c1c1c" strokeWidth="1.300" /><circle cx="21" cy="21" r="9.700" fill="#303030" stroke="#999" strokeWidth="1.200" /><text x="21" y="26" textAnchor="middle" fontFamily="Open Sans" fontSize="14" fontWeight="600" fill="#fff">7</text></svg>
          </TrayIcon>
          <DesktopEdge />
        </TrayGroup>
      </Taskbar>
    </Screen>
  );
}
